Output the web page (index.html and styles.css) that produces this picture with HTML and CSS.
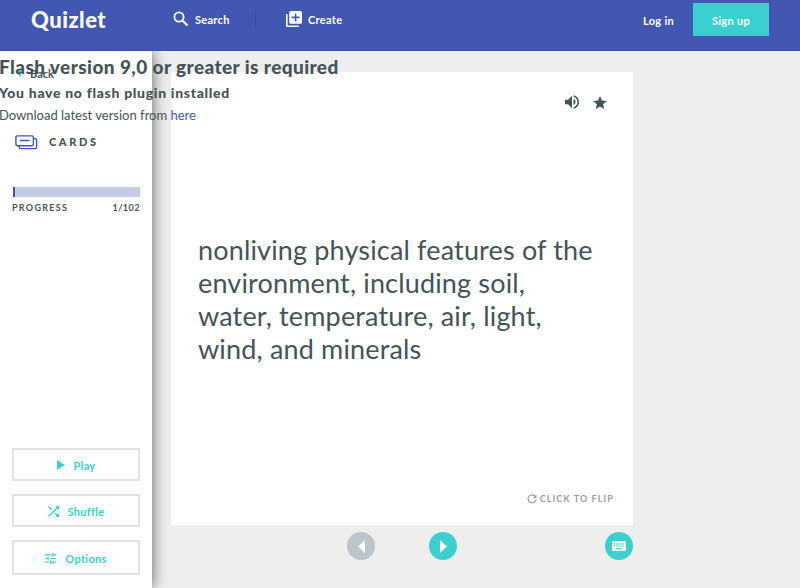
FILE: index.html
```html
<!DOCTYPE html>
<html lang="en">

<head>
    <meta charset="UTF-8">
    <title>Quizlet</title>
    <link rel="stylesheet" href="styles.css">
</head>

<body>
    <header class="header">
        <a class="logo">Quizlet</a>
        <a class="nav-item search">
            <svg width="16" height="16" viewBox="0 0 16 16"><circle cx="6" cy="6" r="4.6" fill="none" stroke="#fff" stroke-width="1.8"/><path d="M9.5 9.5l5 5" stroke="#fff" stroke-width="2.2"/></svg>
            <span>Search</span>
        </a>
        <span class="divider"></span>
        <a class="nav-item create">
            <svg width="16" height="16" viewBox="2 2 20 20" fill="#fff"><path d="M4 6H2v14c0 1.1.9 2 2 2h14v-2H4V6zm16-4H8c-1.1 0-2 .9-2 2v12c0 1.1.9 2 2 2h12c1.1 0 2-.9 2-2V4c0-1.1-.9-2-2-2zm-1 9h-4v4h-2v-4H9V9h4V5h2v4h4v2z"/></svg>
            <span>Create</span>
        </a>
        <a class="login"><span>Log in</span></a>
        <a class="signup"><span>Sign up</span></a>
    </header>
    <div class="page">
        <aside class="sidebar">
            <a class="back">
                <svg width="5" height="8" viewBox="0 0 5 8"><path d="M5 0v8L0 4z" fill="#3ccfcf"/></svg>
                <span>Back</span>
            </a>
            <div class="mode">
                <svg width="23" height="15" viewBox="0 0 23 15" fill="none" stroke="#4257b2" stroke-width="1.4"><rect x=".9" y=".9" width="17.5" height="9.8" rx="1.5"/><path d="M5 5.500h9.500M18.500 3.600h1.700c.9 0 1.400.5 1.400 1.400v7.200c0 .9-.5 1.400-1.400 1.400H5.600c-.9 0-1.400-.5-1.400-1.400v-1.300"/></svg>
                <span>CARDS</span>
            </div>
            <div class="bar"><div class="fill" style="width: 1%"></div></div>
            <div class="progress"><span>PROGRESS</span><span class="count">1/102</span></div>
            <div class="buttons">
                <button class="btn play">
                    <svg width="8" height="10" viewBox="0 0 8 10"><path d="M0 0l8 5-8 5z" fill="#3ccfcf"/></svg>
                    <span>Play</span>
                </button>
                <button class="btn shuffle">
                    <svg width="11" height="11" viewBox="4 4 16 16" fill="#3ccfcf"><path d="M10.590 9.170L5.410 4 4 5.410l5.170 5.170 1.420-1.410zM14.500 4l2.040 2.040L4 18.590 5.410 20 17.960 7.460 20 9.500V4h-5.500zm.33 9.410l-1.410 1.410 3.130 3.130L14.500 20H20v-5.500l-2.040 2.040-3.130-3.130z"/></svg>
                    <span>Shuffle</span>
                </button>
                <button class="btn options">
                    <svg width="11" height="11" viewBox="3 3 18 18" fill="#3ccfcf"><path d="M3 17v2h6v-2H3zM3 5v2h10V5H3zm10 16v-2h8v-2h-8v-2h-2v6h2zM7 9v2H3v2h4v2h2V9H7zm14 4v-2H11v2h10zm-6-4h2V7h4V5h-4V3h-2v6z"/></svg>
                    <span>Options</span>
                </button>
            </div>
        </aside>
        <main class="main">
            <div class="card">
                <div class="tools">
                    <svg width="14" height="14" viewBox="3 3 18 18" fill="#455358"><path d="M3 9v6h4l5 5V4L7 9H3zm13.500 3c0-1.770-1.020-3.290-2.500-4.030v8.050c1.480-.73 2.500-2.250 2.500-4.020zM14 3.230v2.060c2.890.86 5 3.540 5 6.710s-2.110 5.850-5 6.710v2.060c4.010-.91 7-4.490 7-8.770s-2.990-7.860-7-8.770z"/></svg>
                    <svg width="14" height="13" viewBox="2 2 20 19" fill="#455358"><path d="M12 17.270L18.180 21l-1.640-7.030L22 9.240l-7.190-.61L12 2 9.190 8.630 2 9.240l5.460 4.730L5.820 21z"/></svg>
                </div>
                <div class="term">
                    <p>nonliving physical features of the</p>
                    <p>environment, including soil,</p>
                    <p>water, temperature, air, light,</p>
                    <p>wind, and minerals</p>
                </div>
                <div class="flip">
                    <svg width="10" height="10" viewBox="0 0 10 10"><path d="M8.300 2.400A4 4 0 1 0 8.900 6" fill="none" stroke="#95a1a6" stroke-width="1.2"/><path d="M9.500.4v3.800H5.700z" fill="#95a1a6"/></svg>
                    <span>CLICK TO FLIP</span>
                </div>
            </div>
            <div class="controls">
                <button class="round prev"><svg width="7" height="13" viewBox="0 0 7 13"><path d="M7 0v13L0 6.500z" fill="#fff"/></svg></button>
                <button class="round next"><svg width="7" height="13" viewBox="0 0 7 13"><path d="M0 0v13l7-6.500z" fill="#fff"/></svg></button>
                <button class="round keys"><svg width="14" height="10" viewBox="0 0 14 10"><rect width="14" height="10" rx="1.2" fill="#fff"/><path d="M2 3h10M2 5.200h10" stroke="#3ccfcf" stroke-width="1.3" stroke-dasharray="1.3 .8"/><path d="M4 7.700h6" stroke="#3ccfcf" stroke-width="1.2"/></svg></button>
            </div>
        </main>
    </div>
    <div class="notice">
        <h2><span>Flash version 9,0 or greater is required</span></h2>
        <h4><span>You have no flash plugin installed</span></h4>
        <p><span>Download latest version from <a>here</a></span></p>
    </div>
</body>

</html>
```
FILE: styles.css
```css
* {
    box-sizing: border-box;
    margin: 0;
    padding: 0;
}

body {
    height: 588px;
    overflow: hidden;
    background: #eee;
    color: #455358;
    font-family: Lato, "Open Sans", sans-serif;
    white-space: nowrap;
}

svg {
    display: block;
    flex: none;
}

.header {
    display: flex;
    height: 51px;
    background: #4257b2;
    border-bottom: 1px solid #3b4fa5;
    color: #fff;
    font-size: 11px;
    font-weight: 700;
}

.header a {
    flex: none;
    letter-spacing: .3px;
}

.header .logo {
    width: 143px;
    padding-left: 31px;
    font-size: 22px;
    font-weight: 900;
    line-height: 40px;
    letter-spacing: .5px;
}

.nav-item {
    display: flex;
    align-items: center;
    gap: 6px;
    height: 38px;
}

.search {
    width: 82px;
    margin-left: 30px;
}

.divider {
    width: 1px;
    height: 16px;
    margin-top: 11px;
    background: #3a4b98;
}

.create {
    width: 387px;
    padding-left: 30px;
}

.login {
    width: 50px;
    line-height: 41px;
}

.signup {
    width: 76px;
    height: 33px;
    margin-top: 3px;
    background: #3ccfcf;
    line-height: 35px;
    text-align: center;
}

.page {
    display: flex;
    height: 537px;
}

.sidebar {
    display: flex;
    flex-direction: column;
    position: relative;
    width: 152px;
    padding: 0 12px 13px;
    background: #fff;
    box-shadow: 0 0 14px rgba(0, 0, 0, .6);
    clip-path: inset(0 -20px 0 0);
}

.back {
    display: flex;
    align-items: center;
    gap: 9px;
    height: 14px;
    margin-top: 15px;
    padding-left: 4px;
    font-size: 11px;
    font-weight: 700;
}

.mode {
    display: flex;
    align-items: center;
    gap: 11px;
    height: 16px;
    margin-top: 54px;
    padding-left: 3px;
    font-size: 11px;
    font-weight: 900;
    letter-spacing: 2.6px;
}

.mode span {
    margin-top: -2px;
}

.bar {
    height: 10px;
    margin: 37px 0 0 1px;
    background: #c5cae6;
}

.fill {
    min-width: 2px;
    height: 10px;
    background: #4257b2;
}

.progress {
    display: flex;
    justify-content: space-between;
    margin-top: 5px;
    font-size: 9px;
    font-weight: 700;
    line-height: 12px;
    letter-spacing: 1.3px;
}

.count {
    letter-spacing: .5px;
}

.buttons {
    display: flex;
    flex-direction: column;
    gap: 13px;
    margin-top: auto;
}

.btn {
    display: flex;
    align-items: center;
    justify-content: center;
    gap: 9px;
    height: 33px;
    padding-top: 1px;
    background: #fff;
    border: 2px solid #e0e2e4;
    color: #3ccfcf;
    font: 700 11px Lato, sans-serif;
    letter-spacing: .3px;
}

.options {
    height: 35px;
}

.main {
    flex: 1;
    padding: 21px 0 0 19px;
}

.card {
    display: flex;
    flex-direction: column;
    width: 462px;
    height: 453px;
    background: #fff;
}

.tools {
    display: flex;
    justify-content: flex-end;
    align-items: center;
    gap: 14px;
    height: 14px;
    margin-top: 23px;
    padding-right: 26px;
}

.term {
    margin-top: 124px;
    padding-left: 27px;
    font-size: 27px;
    line-height: 33px;
    letter-spacing: .16px;
}

.flip {
    display: flex;
    align-items: center;
    justify-content: flex-end;
    gap: 3px;
    margin-top: auto;
    padding: 0 19px 19px 0;
    color: #95a1a6;
    font-size: 9px;
    font-weight: 700;
    line-height: 14px;
    letter-spacing: 1.1px;
}

.controls {
    display: flex;
    width: 462px;
    margin-top: 7px;
    padding-left: 176px;
}

.round {
    display: flex;
    align-items: center;
    justify-content: center;
    width: 28px;
    height: 28px;
    border: 0;
    border-radius: 50%;
    background: #3ccfcf;
}

.prev {
    background: #bcc5ca;
}

.next {
    margin-left: 54px;
}

.keys {
    margin-left: auto;
}

/* flash fallback message, sits on top of the whole page */
.notice {
    position: absolute;
    top: 55px;
    left: -1px;
}

.notice h2 {
    font-size: 19px;
    font-weight: 900;
    line-height: 24px;
    letter-spacing: .41px;
}

.notice h4 {
    font-size: 14px;
    font-weight: 900;
    line-height: 28px;
    letter-spacing: .7px;
}

.notice p {
    font-size: 13px;
    line-height: 17px;
}

.notice a {
    color: #4257b2;
}
```
